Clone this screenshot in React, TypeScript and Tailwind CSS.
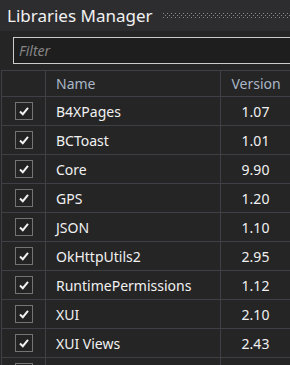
import React from 'react';

const libs = [
  { name: 'B4XPages', version: '1.07' },
  { name: 'BCToast', version: '1.01' },
  { name: 'Core', version: '9.90' },
  { name: 'GPS', version: '1.20' },
  { name: 'JSON', version: '1.10' },
  { name: 'OkHttpUtils2', version: '2.95' },
  { name: 'RuntimePermissions', version: '1.12' },
  { name: 'XUI', version: '2.10' },
  { name: 'XUI Views', version: '2.43' },
  { name: '', version: '' },
];

function Check() {
  return (
    <div className="w-[18px] h-[18px] border border-[#747474] bg-[#232323] flex items-center justify-center">
      <svg width="12" height="12" viewBox="0 0 12 12">
        <path d="M2 6.5 L4.8 9.2 L10 2.8" fill="none" stroke="#f1f1f1" strokeWidth="2" />
      </svg>
    </div>
  );
}

export default function App() {
  return (
    <div className="w-[290px] h-[365px] overflow-hidden bg-[#252526] text-[#f1f1f1]" style={{ fontFamily: '"Noto Sans", "Open Sans", sans-serif' }}>
      {/* Title bar */}
      <div className="h-[31px] bg-[#2d2d30] flex items-center pl-[7px] gap-[10px]">
        <span className="text-[17px] text-[#f1f1f1] whitespace-nowrap">Libraries Manager</span>
        <div className="flex-1 min-w-0 h-[5px]">
          <svg width="100%" height="5" className="block">
            <defs>
              <pattern id="grip" width="4" height="4" patternUnits="userSpaceOnUse">
                <rect x="0" y="0" width="1" height="1" fill="#8a8a8e" />
                <rect x="2" y="2" width="1" height="1" fill="#8a8a8e" />
              </pattern>
            </defs>
            <rect width="100%" height="5" fill="url(#grip)" />
          </svg>
        </div>
      </div>

      {/* Filter */}
      <div className="pt-[6px] pl-[13px] h-[39px]">
        <div className="h-[27px] border border-[#cccccc] border-r-0 bg-[#1e1e1e] flex items-center pl-[5px]">
          <span className="italic text-[14px] text-[#858585]">Filter</span>
        </div>
      </div>

      {/* Table */}
      <div className="border-l border-[#3f3f46] ml-[1px] border-t">
        <div className="grid grid-cols-[44px_175px_1fr] h-[26px] border-b border-[#3f3f46] text-[14px] text-[#a9b7c6]">
          <div className="border-r border-[#3f3f46]" />
          <div className="border-r border-[#3f3f46] flex items-center pl-[10px]">Name</div>
          <div className="flex items-center justify-center pl-[1px]">Version</div>
        </div>
        {libs.map((lib, i) => (
          <div key={i} className="grid grid-cols-[44px_175px_1fr] h-[29px] border-b border-[#3f3f46] text-[14px]">
            <div className="border-r border-[#3f3f46] flex items-center justify-center pl-[1px]">
              <Check />
            </div>
            <div className="border-r border-[#3f3f46] flex items-center pl-[10px]">{lib.name}</div>
            <div className="flex items-center justify-center">{lib.version}</div>
          </div>
        ))}
      </div>
    </div>
  );
}
